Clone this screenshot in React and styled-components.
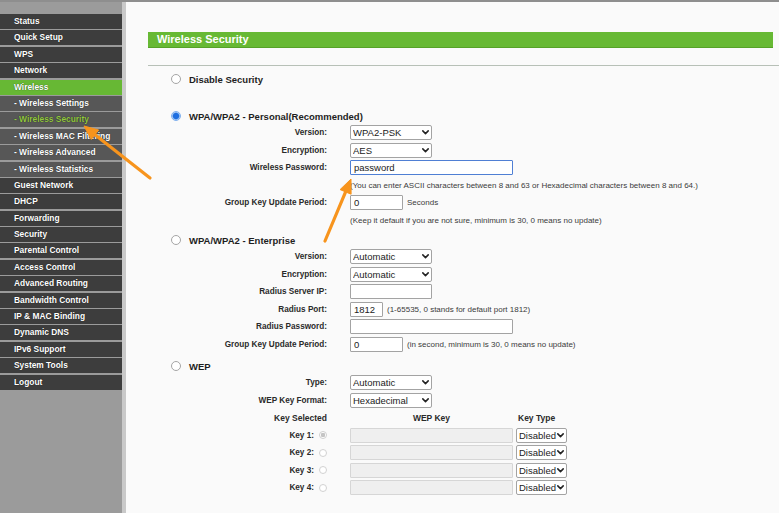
import styled, { createGlobalStyle } from 'styled-components';

const GlobalStyle = createGlobalStyle`
  html, body {
    margin: 0;
    padding: 0;
    background: #fafafa;
    font-family: "Liberation Sans", Arial, sans-serif;
    color: #333;
  }
`;

const menu = [
  { label: 'Status' },
  { label: 'Quick Setup' },
  { label: 'WPS' },
  { label: 'Network' },
  { label: 'Wireless', active: true },
  { label: '- Wireless Settings', sub: true },
  { label: '- Wireless Security', sub: true, current: true },
  { label: '- Wireless MAC Filtering', sub: true },
  { label: '- Wireless Advanced', sub: true },
  { label: '- Wireless Statistics', sub: true },
  { label: 'Guest Network' },
  { label: 'DHCP' },
  { label: 'Forwarding' },
  { label: 'Security' },
  { label: 'Parental Control' },
  { label: 'Access Control' },
  { label: 'Advanced Routing' },
  { label: 'Bandwidth Control' },
  { label: 'IP & MAC Binding' },
  { label: 'Dynamic DNS' },
  { label: 'IPv6 Support' },
  { label: 'System Tools' },
  { label: 'Logout' },
];

function Dropdown({ width, value, options }) {
  return (
    <SelectWrap $w={width}>
      <Select defaultValue={value}>
        {options.map(o => (
          <option key={o}>{o}</option>
        ))}
      </Select>
      <Chevron width="7" height="5" viewBox="0 0 7 5" aria-hidden="true">
        <path d="M0.8 0.9 L3.5 3.6 L6.2 0.9" />
      </Chevron>
    </SelectWrap>
  );
}

export default function App() {
  return (
    <>
      <GlobalStyle />
      <Page>
        <TopLine />
        <Layout>
          <Sidebar>
            {menu.map(item => (
              <MenuItem key={item.label} $sub={item.sub} $active={item.active} $current={item.current}>
                {item.label}
              </MenuItem>
            ))}
          </Sidebar>

          <Main>
            <TitleBar>Wireless Security</TitleBar>
            <Rule />

            <Heading $mt={5}>
              <Radio type="radio" name="sec" />
              <HeadingText>Disable Security</HeadingText>
            </Heading>

            <Heading $mt={21}>
              <Radio type="radio" name="sec" defaultChecked />
              <HeadingText>WPA/WPA2 - Personal(Recommended)</HeadingText>
            </Heading>
            <Row>
              <Label>Version:</Label>
              <Control>
                <Dropdown width={82} value="WPA2-PSK" options={['Automatic', 'WPA-PSK', 'WPA2-PSK']} />
              </Control>
            </Row>
            <Row>
              <Label>Encryption:</Label>
              <Control>
                <Dropdown width={82} value="AES" options={['Automatic', 'TKIP', 'AES']} />
              </Control>
            </Row>
            <Row>
              <Label>Wireless Password:</Label>
              <Control>
                <TextInput $w={163} $focus defaultValue="password" />
              </Control>
            </Row>
            <Row>
              <Label />
              <Control>
                <Note>(You can enter ASCII characters between 8 and 63 or Hexadecimal characters between 8 and 64.)</Note>
              </Control>
            </Row>
            <Row>
              <Label>Group Key Update Period:</Label>
              <Control>
                <TextInput $w={53} defaultValue="0" />
                <Note>Seconds</Note>
              </Control>
            </Row>
            <Row>
              <Label />
              <Control>
                <Note>(Keep it default if you are not sure, minimum is 30, 0 means no update)</Note>
              </Control>
            </Row>

            <Heading $mt={3}>
              <Radio type="radio" name="sec" />
              <HeadingText>WPA/WPA2 - Enterprise</HeadingText>
            </Heading>
            <Row>
              <Label>Version:</Label>
              <Control>
                <Dropdown width={82} value="Automatic" options={['Automatic', 'WPA', 'WPA2']} />
              </Control>
            </Row>
            <Row>
              <Label>Encryption:</Label>
              <Control>
                <Dropdown width={82} value="Automatic" options={['Automatic', 'TKIP', 'AES']} />
              </Control>
            </Row>
            <Row>
              <Label>Radius Server IP:</Label>
              <Control>
                <TextInput $w={82} />
              </Control>
            </Row>
            <Row>
              <Label>Radius Port:</Label>
              <Control>
                <TextInput $w={33} defaultValue="1812" />
                <Note>(1-65535, 0 stands for default port 1812)</Note>
              </Control>
            </Row>
            <Row>
              <Label>Radius Password:</Label>
              <Control>
                <TextInput $w={163} />
              </Control>
            </Row>
            <Row>
              <Label>Group Key Update Period:</Label>
              <Control>
                <TextInput $w={53} defaultValue="0" />
                <Note>(in second, minimum is 30, 0 means no update)</Note>
              </Control>
            </Row>

            <Heading $mt={5}>
              <Radio type="radio" name="sec" />
              <HeadingText>WEP</HeadingText>
            </Heading>
            <Row>
              <Label>Type:</Label>
              <Control>
                <Dropdown width={82} value="Automatic" options={['Automatic', 'Open System', 'Shared Key']} />
              </Control>
            </Row>
            <Row>
              <Label>WEP Key Format:</Label>
              <Control>
                <Dropdown width={82} value="Hexadecimal" options={['Hexadecimal', 'ASCII']} />
              </Control>
            </Row>
            <Row>
              <Label $head>Key Selected</Label>
              <Control>
                <ColHead $w={163} $center>WEP Key</ColHead>
                <ColHead $w={50}>Key Type</ColHead>
              </Control>
            </Row>
            {[1, 2, 3, 4].map(n => (
              <Row key={n}>
                <Label>
                  Key {n}:
                  <KeyRadio type="radio" name="key" disabled defaultChecked={n === 1} />
                </Label>
                <Control $gap={3}>
                  <TextInput $w={163} disabled />
                  <Dropdown width={51} value="Disabled" options={['Disabled', '64bit', '128bit', '152bit']} />
                </Control>
              </Row>
            ))}
          </Main>
        </Layout>

        <Arrows width="779" height="513" viewBox="0 0 779 513">
          <line x1="150" y1="178" x2="95" y2="134.7" />
          <polygon points="84,126 98.7,130 91.3,139.4" />
          <line x1="325" y1="241" x2="345.6" y2="191.9" />
          <polygon points="351,179 351.1,194.2 340.1,189.6" />
        </Arrows>
      </Page>
    </>
  );
}

const Page = styled.div`
  position: relative;
  min-height: 100vh;
  display: flex;
  flex-direction: column;
`;

const TopLine = styled.div`
  height: 2px;
  background: #8e8e8e;
`;

const Layout = styled.div`
  flex: 1;
  display: flex;
`;

const Sidebar = styled.nav`
  width: 122px;
  flex-shrink: 0;
  background: #9b9b9b;
  border-right: 4px solid #c9c9c9;
  padding-top: 12px;
  display: flex;
  flex-direction: column;
  gap: 1.4px;
`;

const MenuItem = styled.div`
  height: 15px;
  line-height: 15px;
  padding-left: 14px;
  font-size: 8.4px;
  font-weight: bold;
  white-space: nowrap;
  overflow: hidden;
  color: ${p => (p.$current ? '#93c840' : '#fff')};
  text-shadow: 0 0 1px rgba(0, 0, 0, 0.7);
  background: ${p => (p.$active ? '#67b834' : p.$sub ? '#575757' : '#3d3d3d')};
`;

const Main = styled.main`
  flex: 1;
  padding-top: 30px;
  padding-left: 22px;
  display: flex;
  flex-direction: column;
`;

const TitleBar = styled.div`
  height: 16px;
  margin-right: 6px;
  box-sizing: border-box;
  padding-left: 9px;
  background: #67b934;
  border-bottom: 1px solid #55a228;
  color: #fff;
  font-size: 11px;
  font-weight: bold;
  line-height: 15px;
`;

const Rule = styled.div`
  height: 1px;
  margin-top: 17px;
  background: #b7c0b7;
`;

const Heading = styled.div`
  height: 16px;
  margin-top: ${p => p.$mt}px;
  padding-left: 23px;
  display: flex;
  align-items: center;
  gap: 8px;
`;

const HeadingText = styled.span`
  font-size: 9.5px;
  font-weight: bold;
  color: #1e1e1e;
`;

const Radio = styled.input`
  appearance: none;
  margin: 0;
  width: 10px;
  height: 10px;
  border-radius: 50%;
  border: 1px solid #a5a5a5;
  background: #fff;
  box-sizing: border-box;

  &:checked {
    border-color: #7fb0ee;
    background: radial-gradient(circle, #1f6fe0 0 2.6px, #3d86e8 3px, #cfe1f8 4px);
  }
`;

const KeyRadio = styled(Radio)`
  width: 8px;
  height: 8px;
  margin-left: 5px;
  border-color: #d2d2d2;

  &:checked {
    border-color: #cfcfcf;
    background: radial-gradient(circle, #c4c4c4 0 2px, #fff 2.5px);
  }
`;

const Row = styled.div`
  height: 17.5px;
  display: flex;
  align-items: center;
`;

const Label = styled.div`
  width: 179px;
  flex-shrink: 0;
  display: flex;
  align-items: center;
  justify-content: flex-end;
  font-size: ${p => (p.$head ? '8.5px' : '8.2px')};
  font-weight: bold;
  color: #2a2a2a;
  white-space: nowrap;
`;

const Control = styled.div`
  margin-left: 23px;
  display: flex;
  align-items: center;
  gap: ${p => p.$gap ?? 4}px;
`;

const Note = styled.span`
  font-size: 8px;
  color: #3a3a3a;
  white-space: nowrap;
`;

const ColHead = styled.span`
  width: ${p => p.$w}px;
  text-align: ${p => (p.$center ? 'center' : 'left')};
  padding-left: ${p => (p.$center ? 0 : 1)}px;
  font-size: 8.5px;
  font-weight: bold;
  color: #2a2a2a;
`;

const SelectWrap = styled.div`
  position: relative;
  width: ${p => p.$w}px;
  height: 15px;
`;

const Select = styled.select`
  appearance: none;
  display: block;
  margin: 0;
  width: 100%;
  height: 15px;
  box-sizing: border-box;
  padding: 0 9px 0 2px;
  font-family: "Liberation Sans", Arial, sans-serif;
  font-size: 9.5px;
  line-height: 13px;
  color: #222;
  background: #fff;
  border: 1px solid #a3a3a3;
  border-radius: 2px;
  outline: none;
`;

const Chevron = styled.svg`
  position: absolute;
  right: 3px;
  top: 5px;
  pointer-events: none;

  path {
    fill: none;
    stroke: #222;
    stroke-width: 1.5;
    stroke-linecap: round;
    stroke-linejoin: round;
  }
`;

const TextInput = styled.input`
  width: ${p => p.$w}px;
  height: 15px;
  box-sizing: border-box;
  padding: 0 3px;
  font-family: "Liberation Sans", Arial, sans-serif;
  font-size: 9.5px;
  color: #222;
  background: #fff;
  border: ${p => (p.$focus ? '1.5px solid #4f7fd4' : '1px solid #a3a3a3')};
  border-radius: 1px;
  outline: none;

  &:disabled {
    background: #efefef;
    border-color: #d6d6d6;
  }
`;

const Arrows = styled.svg`
  position: absolute;
  left: 0;
  top: 0;
  pointer-events: none;

  line {
    stroke: #f7941d;
    stroke-width: 3.2;
    stroke-linecap: round;
  }

  polygon {
    fill: #f7941d;
    stroke: #f7941d;
    stroke-width: 1;
    stroke-linejoin: round;
  }
`;
